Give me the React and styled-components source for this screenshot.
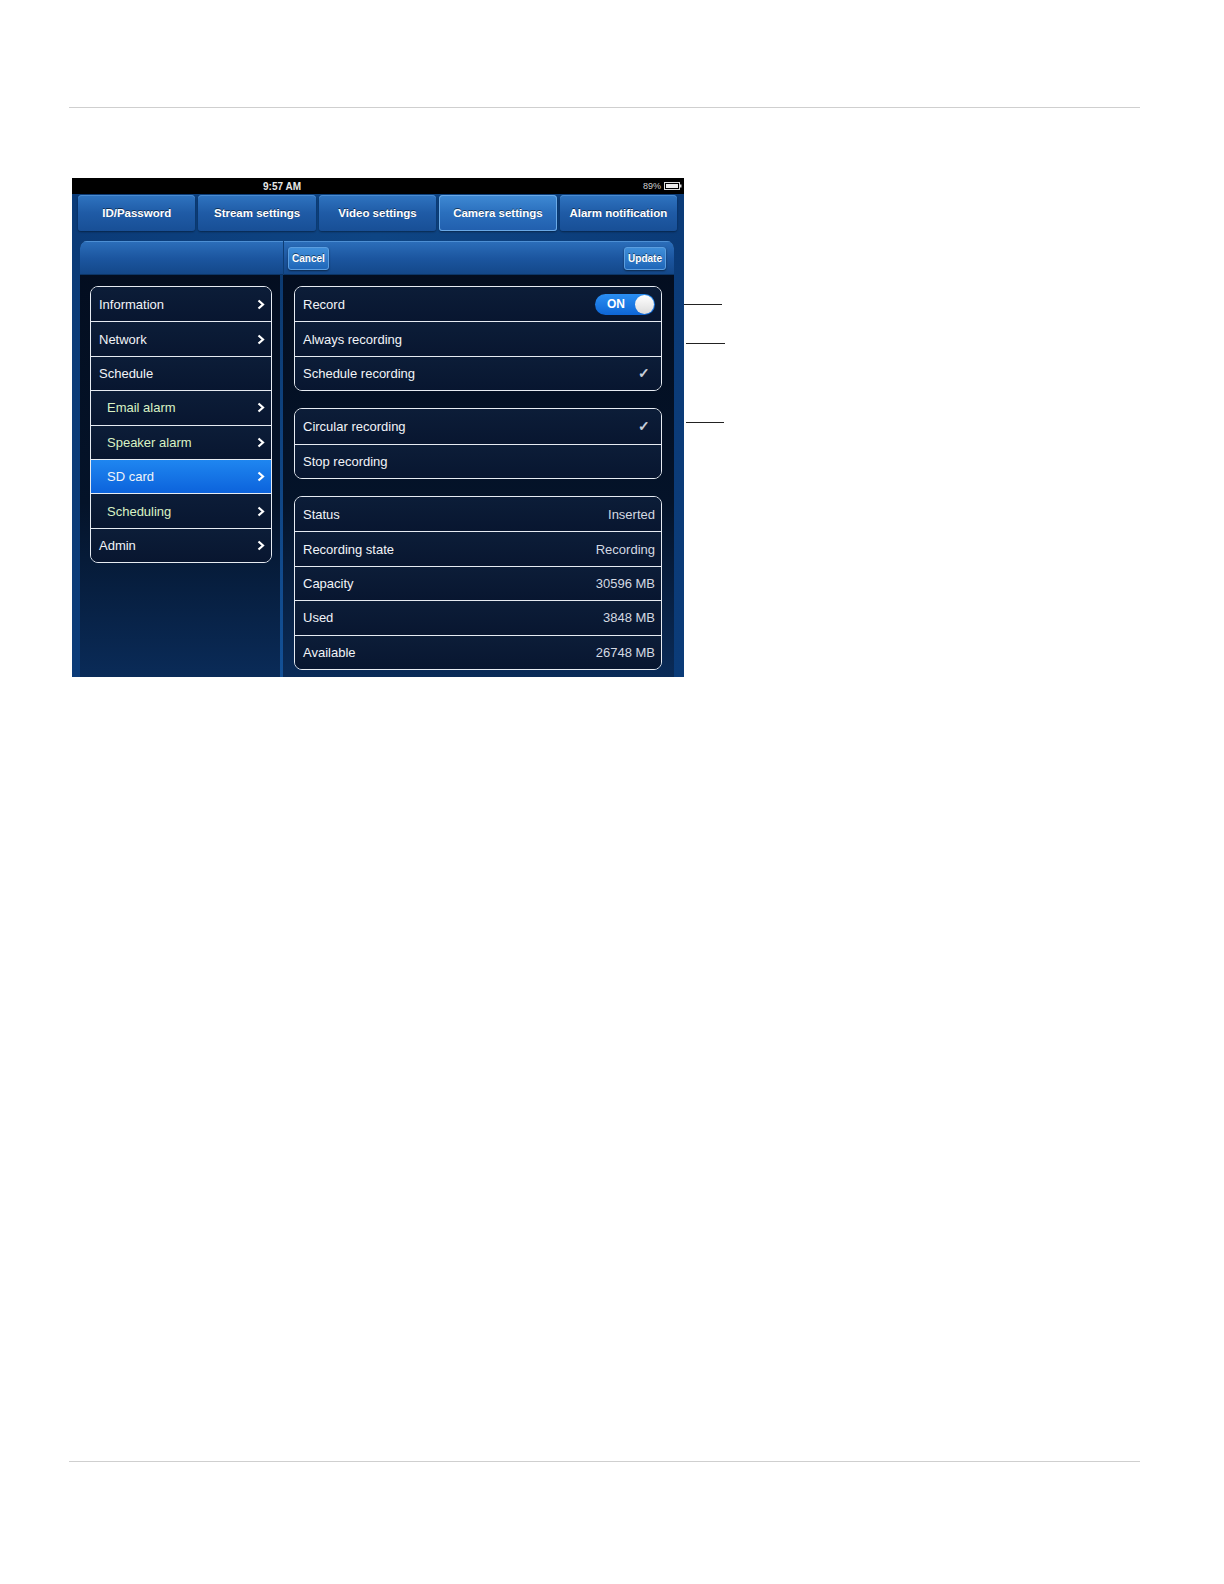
import React from 'react';
import styled, { createGlobalStyle } from 'styled-components';

const GlobalStyle = createGlobalStyle`
  html, body { margin: 0; padding: 0; background: #ffffff; }
  body { font-family: "Liberation Sans", Arial, sans-serif; }
`;

const Page = styled.div`
  width: 100%;
  height: 1560px;
  padding: 107px 84px 0 69px;
  box-sizing: border-box;
  display: flex;
  flex-direction: column;
  overflow: hidden;
`;

const Rule = styled.div`
  height: 1px;
  background: #cfcfcf;
  margin-top: ${p => p.top || 0}px;
`;

const Figure = styled.div`
  display: flex;
  margin-top: 70px;
  margin-left: 3px;
`;

const Shot = styled.div`
  width: 612px;
  height: 499px;
  overflow: hidden;
  display: flex;
  flex-direction: column;
  background: linear-gradient(to right, #0b3b78, #0e4584 50%, #0b3b78);
`;

const StatusBar = styled.div`
  height: 16px;
  background: #000;
  color: #e8e8e8;
  font-size: 10px;
  font-weight: bold;
  display: flex;
  align-items: center;
  padding-left: 191px;
  padding-right: 2px;
`;

const Time = styled.span`
  flex: 1;
`;

const Battery = styled.span`
  display: flex;
  align-items: center;
  gap: 3px;
  font-weight: normal;
  font-size: 9px;
  color: #d0d0d0;
`;

const Tabs = styled.div`
  display: flex;
  gap: 3px;
  padding: 1px 7px 0 6px;
  height: 36px;
`;

const Tab = styled.div`
  flex: 1;
  display: flex;
  align-items: center;
  justify-content: center;
  color: #fff;
  font-size: 11.5px;
  font-weight: bold;
  border-radius: 4px 4px 3px 3px;
  text-shadow: 0 -1px 0 rgba(0, 0, 0, 0.5);
  background: ${p => p.active
    ? 'linear-gradient(#3f8ad4, #2a6fbd 50%, #215fae)'
    : 'linear-gradient(#2f74c0, #1f5ba6 50%, #184f96)'};
  box-shadow: ${p => p.active
    ? 'inset 0 0 0 1px #6aa9e6, 0 1px 2px rgba(0,0,0,0.4)'
    : 'inset 0 1px 0 #4b8cd0, 0 1px 2px rgba(0,0,0,0.4)'};
`;

const Panel = styled.div`
  flex: 1;
  margin: 10px 10px 0 8px;
  border-radius: 7px 7px 0 0;
  overflow: hidden;
  display: flex;
  flex-direction: column;
  background: linear-gradient(#030d1f, #041329 60%, #0a2b58);
`;

const Header = styled.div`
  height: 34px;
  flex-shrink: 0;
  display: flex;
  align-items: center;
  background: linear-gradient(#2c6fbb, #1c56a0 50%, #134788);
  box-shadow: inset 0 1px 0 #4d8fd4, inset 0 -1px 0 #0c3566;
`;

const HeaderLeft = styled.div`
  width: 203px;
  height: 100%;
  border-right: 1px solid #0e3d74;
`;

const HeaderRight = styled.div`
  flex: 1;
  display: flex;
  justify-content: space-between;
  padding: 0 8px 0 4px;
`;

const SmallButton = styled.button`
  font-family: "Liberation Sans", Arial, sans-serif;
  font-size: 10px;
  font-weight: bold;
  color: #fff;
  height: 23px;
  padding: 0 3px;
  border-radius: 3px;
  border: 1px solid #5b9ee0;
  background: linear-gradient(#3f8ed9, #1f66b8);
  text-shadow: 0 -1px 0 rgba(0, 0, 0, 0.5);
  box-shadow: 0 1px 2px rgba(0, 0, 0, 0.5);
`;

const Content = styled.div`
  flex: 1;
  display: flex;
`;

const LeftColumn = styled.div`
  width: 200px;
  padding: 11px 8px 0 10px;
  box-sizing: border-box;
`;

const Divider = styled.div`
  width: 3px;
  background: linear-gradient(#0c3a70, #135096);
`;

const RightColumn = styled.div`
  flex: 1;
  padding: 11px 12px 0 11px;
  display: flex;
  flex-direction: column;
  gap: 17px;
`;

const List = styled.div`
  border: 1.5px solid #e6ebf2;
  border-radius: 8px;
  overflow: hidden;
`;

const Row = styled.div`
  height: 34.4px;
  box-sizing: border-box;
  display: flex;
  align-items: center;
  padding: 0 6px 0 ${p => (p.indent ? 16 : 8)}px;
  font-size: 13px;
  color: ${p => (p.sub ? '#d9f2c4' : '#f2f4f8')};
  border-top: 1.5px solid #e6ebf2;
  background: ${p => p.selected
    ? 'linear-gradient(#1f86f0, #0c63dc)'
    : 'linear-gradient(#0c1d38, #081630)'};
  &:first-child { border-top: none; }
`;

const Label = styled.span`
  flex: 1;
`;

const Value = styled.span`
  color: #d4d9e2;
  font-size: 13px;
`;

const Check = styled.span`
  color: #c6ced9;
  font-size: 14px;
  font-weight: bold;
  margin-right: 5px;
`;

const Toggle = styled.div`
  width: 60px;
  height: 21px;
  border-radius: 11px;
  background: linear-gradient(#2a8ef2, #0e66d6);
  display: flex;
  align-items: center;
  justify-content: space-between;
  padding: 0 1px 0 12px;
  box-sizing: border-box;
  color: #fff;
  font-size: 12px;
  font-weight: bold;
`;

const Knob = styled.div`
  width: 19px;
  height: 19px;
  border-radius: 50%;
  background: linear-gradient(#ffffff, #dcdcdc);
`;

const Callouts = styled.div`
  display: flex;
  flex-direction: column;
`;

const Callout = styled.div`
  height: 1px;
  background: #222;
  width: ${p => p.w}px;
  margin-top: ${p => p.top}px;
  margin-left: ${p => p.left}px;
`;

const Chevron = () => (
  <svg width="8" height="11" viewBox="0 0 8 11">
    <polyline points="1.5,1.5 6,5.5 1.5,9.5" fill="none" stroke="#fff" strokeWidth="2.2" />
  </svg>
);

const menu = [
  { label: 'Information', chevron: true },
  { label: 'Network', chevron: true },
  { label: 'Schedule' },
  { label: 'Email alarm', chevron: true, sub: true },
  { label: 'Speaker alarm', chevron: true, sub: true },
  { label: 'SD card', chevron: true, sub: true, selected: true },
  { label: 'Scheduling', chevron: true, sub: true },
  { label: 'Admin', chevron: true },
];

const status = [
  ['Status', 'Inserted'],
  ['Recording state', 'Recording'],
  ['Capacity', '30596 MB'],
  ['Used', '3848 MB'],
  ['Available', '26748 MB'],
];

const tabs = ['ID/Password', 'Stream settings', 'Video settings', 'Camera settings', 'Alarm notification'];

export default function App() {
  return (
    <Page>
      <GlobalStyle />
      <Rule />
      <Figure>
        <Shot>
          <StatusBar>
            <Time>9:57 AM</Time>
            <Battery>
              89%
              <svg width="18" height="8" viewBox="0 0 18 8">
                <rect x="0.5" y="0.5" width="15" height="7" fill="none" stroke="#ddd" />
                <rect x="2" y="2" width="12" height="4" fill="#eee" />
                <rect x="16" y="2.5" width="1.5" height="3" fill="#ddd" />
              </svg>
            </Battery>
          </StatusBar>
          <Tabs>
            {tabs.map(t => (
              <Tab key={t} active={t === 'Camera settings'}>{t}</Tab>
            ))}
          </Tabs>
          <Panel>
            <Header>
              <HeaderLeft />
              <HeaderRight>
                <SmallButton>Cancel</SmallButton>
                <SmallButton>Update</SmallButton>
              </HeaderRight>
            </Header>
            <Content>
              <LeftColumn>
                <List>
                  {menu.map(m => (
                    <Row key={m.label} indent={m.sub} sub={m.sub && !m.selected} selected={m.selected}>
                      <Label>{m.label}</Label>
                      {m.chevron && <Chevron />}
                    </Row>
                  ))}
                </List>
              </LeftColumn>
              <Divider />
              <RightColumn>
                <List>
                  <Row>
                    <Label>Record</Label>
                    <Toggle>ON<Knob /></Toggle>
                  </Row>
                  <Row><Label>Always recording</Label></Row>
                  <Row><Label>Schedule recording</Label><Check>✓</Check></Row>
                </List>
                <List>
                  <Row><Label>Circular recording</Label><Check>✓</Check></Row>
                  <Row><Label>Stop recording</Label></Row>
                </List>
                <List>
                  {status.map(([k, v]) => (
                    <Row key={k}>
                      <Label>{k}</Label>
                      <Value>{v}</Value>
                    </Row>
                  ))}
                </List>
              </RightColumn>
            </Content>
          </Panel>
        </Shot>
        <Callouts>
          <Callout top={126} left={0} w={38} />
          <Callout top={38} left={2} w={39} />
          <Callout top={78} left={2} w={38} />
        </Callouts>
      </Figure>
      <Rule top={1461 - 108 - 70 - 499} />
    </Page>
  );
}
